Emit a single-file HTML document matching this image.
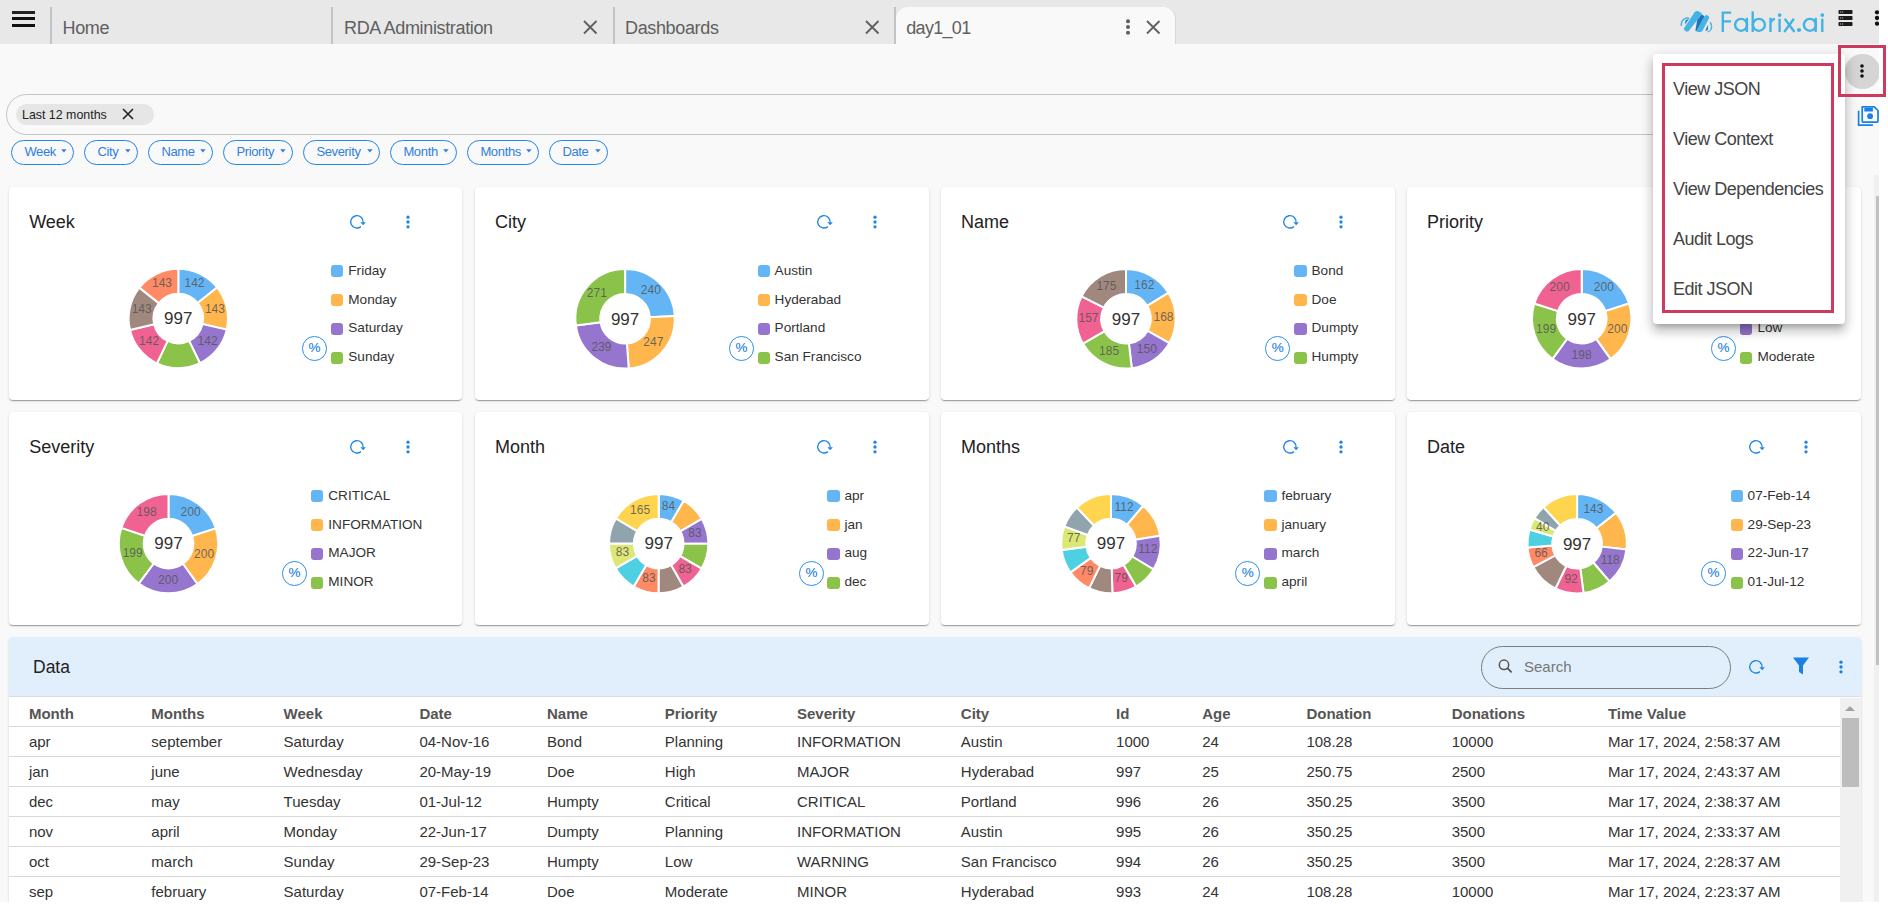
<!DOCTYPE html>
<html><head><meta charset="utf-8"><style>
*{box-sizing:border-box;}
html,body{margin:0;padding:0;}
body{width:1888px;height:905px;background:#fff;position:relative;overflow:hidden;font-family:"Liberation Sans", sans-serif;}
#app{position:absolute;left:0;top:0;width:1879px;height:902px;background:#f9f9f9;overflow:hidden;}
.abs{position:absolute;}
.tabbar{position:absolute;left:0;top:0;width:1879px;height:44px;background:#e8e8e8;}
.tabtxt{position:absolute;font-size:18px;letter-spacing:-0.35px;color:#5f5f5f;white-space:nowrap;line-height:20px;top:17.9px;}
.tdiv{position:absolute;top:7px;width:2px;height:37px;background:#bec4c8;}
.card{position:absolute;width:453.75px;height:213px;background:#fff;border-radius:4px;box-shadow:0 2px 1px -1px rgba(0,0,0,.2),0 1px 1px 0 rgba(0,0,0,.14),0 1px 3px 0 rgba(0,0,0,.12);}
.ctitle{position:absolute;font-size:18px;color:#222;line-height:19px;white-space:nowrap;}
.lsq{position:absolute;width:12.2px;height:12.2px;border-radius:3px;}
.ltx{position:absolute;font-size:13.6px;color:#333;line-height:18px;white-space:nowrap;}
.pct{position:absolute;width:24.6px;height:24.6px;border:1px solid #2a8ff0;border-radius:50%;color:#1a7ee0;font-size:13.5px;-webkit-text-stroke:0.1px #1a7ee0;line-height:22.6px;text-align:center;}
.donuts{position:absolute;left:0;top:0;}
.dl{font-family:"Liberation Sans", sans-serif;font-size:12px;fill:#555;fill-opacity:.85;}
.dc{font-family:"Liberation Sans", sans-serif;font-size:17px;fill:#333;}
.chip{position:absolute;top:140px;height:24.5px;border:1.5px solid #2185e8;border-radius:13px;color:#2f7fe0;font-size:13px;letter-spacing:-0.35px;line-height:22.4px;white-space:nowrap;padding-left:12.4px;}
.chip i{position:absolute;top:9.3px;width:0;height:0;border-left:2.6px solid transparent;border-right:2.6px solid transparent;border-top:3.2px solid #2f7fe0;}
.th{position:absolute;font-size:15px;font-weight:bold;color:#555;white-space:nowrap;line-height:18px;}
.td{position:absolute;font-size:15px;color:#333;white-space:nowrap;line-height:18px;}
.rl{position:absolute;left:9px;width:1831px;height:1px;background:#d9d9d9;}
.menuitem{position:absolute;left:1673px;font-size:18px;letter-spacing:-0.5px;color:#444;margin-top:0.8px;white-space:nowrap;line-height:20px;}
</style></head>
<body>
<div id="app">

<div class="tabbar"></div>
<div class="abs" style="left:12px;top:11px;width:23px;height:3px;background:#222"></div>
<div class="abs" style="left:12px;top:17px;width:23px;height:3px;background:#111"></div>
<div class="abs" style="left:12px;top:23.5px;width:23px;height:3px;background:#111"></div>
<div class="tdiv" style="left:50px"></div>
<div class="tabtxt" style="left:62.5px;">Home</div>
<div class="tdiv" style="left:331px"></div>
<div class="tabtxt" style="left:344px;">RDA Administration</div>
<svg class="abs" style="left:582.0px;top:19.1px" width="16.5" height="16.5"><path d="M2,2L14.5,14.5M14.5,2L2,14.5" stroke="#5f5f5f" stroke-width="1.8"/></svg>
<div class="tdiv" style="left:613px"></div>
<div class="tabtxt" style="left:625px;">Dashboards</div>
<svg class="abs" style="left:863.5px;top:19.1px" width="16.5" height="16.5"><path d="M2,2L14.5,14.5M14.5,2L2,14.5" stroke="#5f5f5f" stroke-width="1.8"/></svg>
<div class="tdiv" style="left:894px"></div>
<div class="abs" style="left:896px;top:7px;width:279.5px;height:37px;background:#f9f9f9;border-radius:12px 12px 0 0;border-right:1px solid #d3d8dc;"></div>
<div class="tabtxt" style="left:906.3px;letter-spacing:-0.7px">day1_01</div>
<svg class="abs" style="left:1122.9px;top:17.3px" width="10" height="20"><circle cx="5" cy="4.3" r="2.0" fill="#5f5f5f"/><circle cx="5" cy="10" r="2.0" fill="#5f5f5f"/><circle cx="5" cy="15.7" r="2.0" fill="#5f5f5f"/></svg>
<svg class="abs" style="left:1144.5px;top:19.1px" width="16.5" height="16.5"><path d="M2,2L14.5,14.5M14.5,2L2,14.5" stroke="#5f5f5f" stroke-width="1.8"/></svg>
<svg class="abs" style="left:1676px;top:6px" width="40" height="30" viewBox="0 0 40 30">
  <path d="M5.3,20 Q4.8,13.6 10.5,12 Q12.2,11.7 13.2,12.6" fill="none" stroke="#42b4e6" stroke-width="1.4"/>
  <path d="M9.6,14.2 L13,12.8 L8.8,18.8Z" fill="#1e73be"/>
  <path d="M8,22.2 L18.6,6.3 Q20,4.5 22,5 L24.3,6.2 Q26,7.3 25.5,8.4 L12.8,24.9 Q11.5,26 9.9,25.4 L8.6,24.3 Q7.5,23.3 8,22.2 Z" fill="#42b4e6"/>
  <path d="M21.2,13.9 L25.9,8.3 L28.6,10.6 L20.4,25.2 L19.4,24.8Z" fill="#1e73be"/>
  <path d="M20.6,25 L28.8,10.2 Q29.8,8.8 31.2,9.2 L32.4,9.9 Q33.6,10.8 33.2,12 L26.3,25 Q25.6,26 24.3,26 L22,26 Q20.4,26 20.6,25Z" fill="#42b4e6"/>
  <path d="M32.2,18.6 L31.8,23.9 L29.2,24.9Z" fill="#1e73be"/>
  <path d="M34.3,16 Q36.5,20 35,23.5 Q33.8,25.6 31.5,25.8" fill="none" stroke="#42b4e6" stroke-width="1.3"/>
</svg>
<svg class="abs" style="left:1716px;top:6px" width="112" height="30" viewBox="0 0 112 30">
 <g fill="none" stroke="#3fb3e6" stroke-width="2.35">
  <path d="M6.8,26V5.5M5.7,6.6H15.1M5.7,15.4H15"/>
  <circle cx="25.1" cy="18.8" r="6.0"/><path d="M30.9,11.8V26"/>
  <path d="M36.7,5.4V26"/><circle cx="42.9" cy="18.8" r="6.0"/>
  <path d="M54.5,11.8V26M54.5,17Q55.8,13.1 59,12.9"/>
  <path d="M63.6,12.7V26"/>
  <path d="M68.8,12.7L78.5,26M77.9,12.7L68.2,26" stroke-width="2.3"/>
  <circle cx="93.9" cy="18.8" r="6.0"/><path d="M99.7,11.8V26"/>
  <path d="M106.3,12.7V26"/>
 </g>
 <g fill="#3fb3e6"><circle cx="63.7" cy="9.1" r="1.9"/><circle cx="83" cy="24" r="2.1"/><circle cx="106.3" cy="9.1" r="1.9"/></g>
</svg>
<svg class="abs" style="left:1838px;top:9px" width="15" height="19" viewBox="0 0 15 19">
  <rect x="0.5" y="1" width="14" height="4" rx="0.8" fill="#1c1c1c"/>
  <rect x="0.5" y="7" width="14" height="4" rx="0.8" fill="#1c1c1c"/>
  <rect x="0.5" y="13" width="14" height="4" rx="0.8" fill="#1c1c1c"/>
  <rect x="2" y="2.5" width="1.2" height="1" fill="#bbb"/><rect x="4" y="2.5" width="1.2" height="1" fill="#bbb"/>
  <rect x="2" y="8.5" width="1.2" height="1" fill="#bbb"/><rect x="4" y="8.5" width="1.2" height="1" fill="#bbb"/>
  <rect x="2" y="14.5" width="1.2" height="1" fill="#bbb"/><rect x="4" y="14.5" width="1.2" height="1" fill="#bbb"/>
</svg>
<svg class="abs" style="left:1871.6px;top:8.2px" width="10" height="20"><circle cx="5" cy="4.3" r="2.15" fill="#111"/><circle cx="5" cy="10" r="2.15" fill="#111"/><circle cx="5" cy="15.7" r="2.15" fill="#111"/></svg>


<div class="abs" style="left:6px;top:94px;width:1830px;height:41px;border:1px solid #c4c4c4;border-radius:21px;"></div>
<div class="abs" style="left:16px;top:104px;width:138px;height:21px;background:#e6e6e6;border-radius:11px;"></div>
<div class="abs" style="left:22px;top:107px;font-size:12.4px;line-height:16px;color:#222;white-space:nowrap">Last 12 months</div>
<svg class="abs" style="left:120.7px;top:107.2px" width="14" height="14"><path d="M2,2L12,12M12,2L2,12" stroke="#222" stroke-width="1.6"/></svg>
<div class="chip" style="left:11px;width:63px">Week<svg class="abs" style="left:48.7px;top:7.6px" width="6" height="4" viewBox="0 0 6 4"><path d="M0.2,0.2H5.6L2.9,3.6Z" fill="#2f7fe0"/></svg></div>
<div class="chip" style="left:84px;width:54px">City<svg class="abs" style="left:39.7px;top:7.6px" width="6" height="4" viewBox="0 0 6 4"><path d="M0.2,0.2H5.6L2.9,3.6Z" fill="#2f7fe0"/></svg></div>
<div class="chip" style="left:148px;width:65px">Name<svg class="abs" style="left:50.7px;top:7.6px" width="6" height="4" viewBox="0 0 6 4"><path d="M0.2,0.2H5.6L2.9,3.6Z" fill="#2f7fe0"/></svg></div>
<div class="chip" style="left:223px;width:70px">Priority<svg class="abs" style="left:55.7px;top:7.6px" width="6" height="4" viewBox="0 0 6 4"><path d="M0.2,0.2H5.6L2.9,3.6Z" fill="#2f7fe0"/></svg></div>
<div class="chip" style="left:303px;width:77px">Severity<svg class="abs" style="left:62.7px;top:7.6px" width="6" height="4" viewBox="0 0 6 4"><path d="M0.2,0.2H5.6L2.9,3.6Z" fill="#2f7fe0"/></svg></div>
<div class="chip" style="left:390px;width:66.5px">Month<svg class="abs" style="left:52.2px;top:7.6px" width="6" height="4" viewBox="0 0 6 4"><path d="M0.2,0.2H5.6L2.9,3.6Z" fill="#2f7fe0"/></svg></div>
<div class="chip" style="left:467px;width:72px">Months<svg class="abs" style="left:57.7px;top:7.6px" width="6" height="4" viewBox="0 0 6 4"><path d="M0.2,0.2H5.6L2.9,3.6Z" fill="#2f7fe0"/></svg></div>
<div class="chip" style="left:549px;width:59px">Date<svg class="abs" style="left:44.7px;top:7.6px" width="6" height="4" viewBox="0 0 6 4"><path d="M0.2,0.2H5.6L2.9,3.6Z" fill="#2f7fe0"/></svg></div>
<div class="abs" style="left:1845px;top:54px;width:34.5px;height:34.5px;border-radius:50%;background:#d5d5d5"></div>
<svg class="abs" style="left:1857.3px;top:61.4px" width="10" height="20"><circle cx="5" cy="5" r="1.8" fill="#111"/><circle cx="5" cy="10" r="1.8" fill="#111"/><circle cx="5" cy="15" r="1.8" fill="#111"/></svg>
<svg class="abs" style="left:1856px;top:103px" width="24" height="24" viewBox="0 0 24 24">
  <path d="M6.2,3.8 H18.3 L22,7.5 V18.1 Q22,19.1 21,19.1 H7.2 Q6.2,19.1 6.2,18.1 Z" fill="none" stroke="#1a7fe6" stroke-width="1.7" stroke-linejoin="round"/>
  <rect x="8.3" y="5" width="8.6" height="3.5" fill="#1a7fe6"/>
  <circle cx="14.1" cy="13.2" r="2.9" fill="#1a7fe6"/>
  <path d="M2.6,7.8 V22.1 H16.9" fill="none" stroke="#1a7fe6" stroke-width="1.7"/>
</svg>
<div class="abs" style="left:1874px;top:175px;width:5px;height:727px;background:#f0f0f0"></div>
<div class="abs" style="left:1876px;top:196px;width:3px;height:469px;background:#c1c1c1"></div>

<div class="card" style="left:9px;width:453.2px;top:187px;"></div>
<div class="ctitle" style="left:29.2px;top:212.5px;">Week</div>
<svg class="abs" style="left:346.9px;top:211.7px" width="20" height="20" viewBox="0 0 20 20"><path d="M13.9,14.6A6.2,6.2 0 1 1 16.1,10.4" fill="none" stroke="#1f86e8" stroke-width="1.4"/><path d="M13.4,10.2L18.9,10.2L16.15,13.3Z" fill="#1f86e8"/></svg>
<svg class="abs" style="left:402.6px;top:211.5px" width="10" height="20"><circle cx="5" cy="5.2" r="1.65" fill="#1f86e8"/><circle cx="5" cy="10" r="1.65" fill="#1f86e8"/><circle cx="5" cy="14.8" r="1.65" fill="#1f86e8"/></svg>
<div class="lsq" style="left:331.2px;top:265.2px;background:#64b5f6"></div>
<div class="ltx" style="left:348.3px;top:261.8px;">Friday</div>
<div class="lsq" style="left:331.2px;top:294.0px;background:#ffb74d"></div>
<div class="ltx" style="left:348.3px;top:290.6px;">Monday</div>
<div class="lsq" style="left:331.2px;top:322.8px;background:#9575cd"></div>
<div class="ltx" style="left:348.3px;top:319.4px;">Saturday</div>
<div class="lsq" style="left:331.2px;top:351.6px;background:#8bc34a"></div>
<div class="ltx" style="left:348.3px;top:348.2px;">Sunday</div>
<div class="pct" style="left:302.2px;top:336.2px;">%</div><div class="card" style="left:474.8px;width:454.4px;top:187px;"></div>
<div class="ctitle" style="left:495.0px;top:212.5px;">City</div>
<svg class="abs" style="left:813.9px;top:211.7px" width="20" height="20" viewBox="0 0 20 20"><path d="M13.9,14.6A6.2,6.2 0 1 1 16.1,10.4" fill="none" stroke="#1f86e8" stroke-width="1.4"/><path d="M13.4,10.2L18.9,10.2L16.15,13.3Z" fill="#1f86e8"/></svg>
<svg class="abs" style="left:869.6px;top:211.5px" width="10" height="20"><circle cx="5" cy="5.2" r="1.65" fill="#1f86e8"/><circle cx="5" cy="10" r="1.65" fill="#1f86e8"/><circle cx="5" cy="14.8" r="1.65" fill="#1f86e8"/></svg>
<div class="lsq" style="left:757.5px;top:265.2px;background:#64b5f6"></div>
<div class="ltx" style="left:774.6px;top:261.8px;">Austin</div>
<div class="lsq" style="left:757.5px;top:294.0px;background:#ffb74d"></div>
<div class="ltx" style="left:774.6px;top:290.6px;">Hyderabad</div>
<div class="lsq" style="left:757.5px;top:322.8px;background:#9575cd"></div>
<div class="ltx" style="left:774.6px;top:319.4px;">Portland</div>
<div class="lsq" style="left:757.5px;top:351.6px;background:#8bc34a"></div>
<div class="ltx" style="left:774.6px;top:348.2px;">San Francisco</div>
<div class="pct" style="left:729.2px;top:336.2px;">%</div><div class="card" style="left:940.8px;width:454.4px;top:187px;"></div>
<div class="ctitle" style="left:961.0px;top:212.5px;">Name</div>
<svg class="abs" style="left:1279.9px;top:211.7px" width="20" height="20" viewBox="0 0 20 20"><path d="M13.9,14.6A6.2,6.2 0 1 1 16.1,10.4" fill="none" stroke="#1f86e8" stroke-width="1.4"/><path d="M13.4,10.2L18.9,10.2L16.15,13.3Z" fill="#1f86e8"/></svg>
<svg class="abs" style="left:1335.6px;top:211.5px" width="10" height="20"><circle cx="5" cy="5.2" r="1.65" fill="#1f86e8"/><circle cx="5" cy="10" r="1.65" fill="#1f86e8"/><circle cx="5" cy="14.8" r="1.65" fill="#1f86e8"/></svg>
<div class="lsq" style="left:1294.4px;top:265.2px;background:#64b5f6"></div>
<div class="ltx" style="left:1311.5px;top:261.8px;">Bond</div>
<div class="lsq" style="left:1294.4px;top:294.0px;background:#ffb74d"></div>
<div class="ltx" style="left:1311.5px;top:290.6px;">Doe</div>
<div class="lsq" style="left:1294.4px;top:322.8px;background:#9575cd"></div>
<div class="ltx" style="left:1311.5px;top:319.4px;">Dumpty</div>
<div class="lsq" style="left:1294.4px;top:351.6px;background:#8bc34a"></div>
<div class="ltx" style="left:1311.5px;top:348.2px;">Humpty</div>
<div class="pct" style="left:1265.4px;top:336.2px;">%</div><div class="card" style="left:1406.8px;width:454.2px;top:187px;"></div>
<div class="ctitle" style="left:1427.0px;top:212.5px;">Priority</div>
<svg class="abs" style="left:1745.7px;top:211.7px" width="20" height="20" viewBox="0 0 20 20"><path d="M13.9,14.6A6.2,6.2 0 1 1 16.1,10.4" fill="none" stroke="#1f86e8" stroke-width="1.4"/><path d="M13.4,10.2L18.9,10.2L16.15,13.3Z" fill="#1f86e8"/></svg>
<svg class="abs" style="left:1801.4px;top:211.5px" width="10" height="20"><circle cx="5" cy="5.2" r="1.65" fill="#1f86e8"/><circle cx="5" cy="10" r="1.65" fill="#1f86e8"/><circle cx="5" cy="14.8" r="1.65" fill="#1f86e8"/></svg>
<div class="lsq" style="left:1740.3px;top:265.2px;background:#64b5f6"></div>
<div class="ltx" style="left:1757.4px;top:261.8px;">Critical</div>
<div class="lsq" style="left:1740.3px;top:294.0px;background:#ffb74d"></div>
<div class="ltx" style="left:1757.4px;top:290.6px;">High</div>
<div class="lsq" style="left:1740.3px;top:322.8px;background:#9575cd"></div>
<div class="ltx" style="left:1757.4px;top:319.4px;">Low</div>
<div class="lsq" style="left:1740.3px;top:351.6px;background:#8bc34a"></div>
<div class="ltx" style="left:1757.4px;top:348.2px;">Moderate</div>
<div class="pct" style="left:1711.3px;top:336.2px;">%</div><div class="card" style="left:9px;width:453.2px;top:412px;"></div>
<div class="ctitle" style="left:29.2px;top:437.5px;">Severity</div>
<svg class="abs" style="left:346.9px;top:436.7px" width="20" height="20" viewBox="0 0 20 20"><path d="M13.9,14.6A6.2,6.2 0 1 1 16.1,10.4" fill="none" stroke="#1f86e8" stroke-width="1.4"/><path d="M13.4,10.2L18.9,10.2L16.15,13.3Z" fill="#1f86e8"/></svg>
<svg class="abs" style="left:402.6px;top:436.5px" width="10" height="20"><circle cx="5" cy="5.2" r="1.65" fill="#1f86e8"/><circle cx="5" cy="10" r="1.65" fill="#1f86e8"/><circle cx="5" cy="14.8" r="1.65" fill="#1f86e8"/></svg>
<div class="lsq" style="left:311.2px;top:490.2px;background:#64b5f6"></div>
<div class="ltx" style="left:328.3px;top:486.8px;">CRITICAL</div>
<div class="lsq" style="left:311.2px;top:519.0px;background:#ffb74d"></div>
<div class="ltx" style="left:328.3px;top:515.6px;">INFORMATION</div>
<div class="lsq" style="left:311.2px;top:547.8px;background:#9575cd"></div>
<div class="ltx" style="left:328.3px;top:544.4px;">MAJOR</div>
<div class="lsq" style="left:311.2px;top:576.6px;background:#8bc34a"></div>
<div class="ltx" style="left:328.3px;top:573.2px;">MINOR</div>
<div class="pct" style="left:282.1px;top:561.2px;">%</div><div class="card" style="left:474.8px;width:454.4px;top:412px;"></div>
<div class="ctitle" style="left:495.0px;top:437.5px;">Month</div>
<svg class="abs" style="left:813.9px;top:436.7px" width="20" height="20" viewBox="0 0 20 20"><path d="M13.9,14.6A6.2,6.2 0 1 1 16.1,10.4" fill="none" stroke="#1f86e8" stroke-width="1.4"/><path d="M13.4,10.2L18.9,10.2L16.15,13.3Z" fill="#1f86e8"/></svg>
<svg class="abs" style="left:869.6px;top:436.5px" width="10" height="20"><circle cx="5" cy="5.2" r="1.65" fill="#1f86e8"/><circle cx="5" cy="10" r="1.65" fill="#1f86e8"/><circle cx="5" cy="14.8" r="1.65" fill="#1f86e8"/></svg>
<div class="lsq" style="left:827.4px;top:490.2px;background:#64b5f6"></div>
<div class="ltx" style="left:844.5px;top:486.8px;">apr</div>
<div class="lsq" style="left:827.4px;top:519.0px;background:#ffb74d"></div>
<div class="ltx" style="left:844.5px;top:515.6px;">jan</div>
<div class="lsq" style="left:827.4px;top:547.8px;background:#9575cd"></div>
<div class="ltx" style="left:844.5px;top:544.4px;">aug</div>
<div class="lsq" style="left:827.4px;top:576.6px;background:#8bc34a"></div>
<div class="ltx" style="left:844.5px;top:573.2px;">dec</div>
<div class="pct" style="left:799.2px;top:561.2px;">%</div><div class="card" style="left:940.8px;width:454.4px;top:412px;"></div>
<div class="ctitle" style="left:961.0px;top:437.5px;">Months</div>
<svg class="abs" style="left:1279.9px;top:436.7px" width="20" height="20" viewBox="0 0 20 20"><path d="M13.9,14.6A6.2,6.2 0 1 1 16.1,10.4" fill="none" stroke="#1f86e8" stroke-width="1.4"/><path d="M13.4,10.2L18.9,10.2L16.15,13.3Z" fill="#1f86e8"/></svg>
<svg class="abs" style="left:1335.6px;top:436.5px" width="10" height="20"><circle cx="5" cy="5.2" r="1.65" fill="#1f86e8"/><circle cx="5" cy="10" r="1.65" fill="#1f86e8"/><circle cx="5" cy="14.8" r="1.65" fill="#1f86e8"/></svg>
<div class="lsq" style="left:1264.4px;top:490.2px;background:#64b5f6"></div>
<div class="ltx" style="left:1281.5px;top:486.8px;">february</div>
<div class="lsq" style="left:1264.4px;top:519.0px;background:#ffb74d"></div>
<div class="ltx" style="left:1281.5px;top:515.6px;">january</div>
<div class="lsq" style="left:1264.4px;top:547.8px;background:#9575cd"></div>
<div class="ltx" style="left:1281.5px;top:544.4px;">march</div>
<div class="lsq" style="left:1264.4px;top:576.6px;background:#8bc34a"></div>
<div class="ltx" style="left:1281.5px;top:573.2px;">april</div>
<div class="pct" style="left:1235.4px;top:561.2px;">%</div><div class="card" style="left:1406.8px;width:454.2px;top:412px;"></div>
<div class="ctitle" style="left:1427.0px;top:437.5px;">Date</div>
<svg class="abs" style="left:1745.7px;top:436.7px" width="20" height="20" viewBox="0 0 20 20"><path d="M13.9,14.6A6.2,6.2 0 1 1 16.1,10.4" fill="none" stroke="#1f86e8" stroke-width="1.4"/><path d="M13.4,10.2L18.9,10.2L16.15,13.3Z" fill="#1f86e8"/></svg>
<svg class="abs" style="left:1801.4px;top:436.5px" width="10" height="20"><circle cx="5" cy="5.2" r="1.65" fill="#1f86e8"/><circle cx="5" cy="10" r="1.65" fill="#1f86e8"/><circle cx="5" cy="14.8" r="1.65" fill="#1f86e8"/></svg>
<div class="lsq" style="left:1730.5px;top:490.2px;background:#64b5f6"></div>
<div class="ltx" style="left:1747.6px;top:486.8px;">07-Feb-14</div>
<div class="lsq" style="left:1730.5px;top:519.0px;background:#ffb74d"></div>
<div class="ltx" style="left:1747.6px;top:515.6px;">29-Sep-23</div>
<div class="lsq" style="left:1730.5px;top:547.8px;background:#9575cd"></div>
<div class="ltx" style="left:1747.6px;top:544.4px;">22-Jun-17</div>
<div class="lsq" style="left:1730.5px;top:576.6px;background:#8bc34a"></div>
<div class="ltx" style="left:1747.6px;top:573.2px;">01-Jul-12</div>
<div class="pct" style="left:1701.2px;top:561.2px;">%</div>
<svg class="donuts" width="1888" height="905" viewBox="0 0 1888 905"><path d="M178.30,268.80A49.7,49.7 0 0 1 217.07,287.41L197.65,302.99A24.8,24.8 0 0 0 178.30,293.70Z" fill="#64b5f6" stroke="#fff" stroke-width="2" stroke-linejoin="round"/>
<path d="M217.07,287.41A49.7,49.7 0 0 1 226.74,329.60L202.47,324.04A24.8,24.8 0 0 0 197.65,302.99Z" fill="#ffb74d" stroke="#fff" stroke-width="2" stroke-linejoin="round"/>
<path d="M226.74,329.60A49.7,49.7 0 0 1 199.94,363.24L189.10,340.82A24.8,24.8 0 0 0 202.47,324.04Z" fill="#9575cd" stroke="#fff" stroke-width="2" stroke-linejoin="round"/>
<path d="M199.94,363.24A49.7,49.7 0 0 1 156.94,363.37L167.64,340.89A24.8,24.8 0 0 0 189.10,340.82Z" fill="#8bc34a" stroke="#fff" stroke-width="2" stroke-linejoin="round"/>
<path d="M156.94,363.37A49.7,49.7 0 0 1 129.93,329.91L154.16,324.19A24.8,24.8 0 0 0 167.64,340.89Z" fill="#f06292" stroke="#fff" stroke-width="2" stroke-linejoin="round"/>
<path d="M129.93,329.91A49.7,49.7 0 0 1 139.33,287.65L158.86,303.11A24.8,24.8 0 0 0 154.16,324.19Z" fill="#a1887f" stroke="#fff" stroke-width="2" stroke-linejoin="round"/>
<path d="M139.33,287.65A49.7,49.7 0 0 1 178.30,268.80L178.30,293.70A24.8,24.8 0 0 0 158.86,303.11Z" fill="#ff8a65" stroke="#fff" stroke-width="2" stroke-linejoin="round"/>
<text x="194.5" y="287.3" text-anchor="middle" class="dl">142</text>
<text x="214.9" y="312.7" text-anchor="middle" class="dl">143</text>
<text x="207.6" y="344.5" text-anchor="middle" class="dl">142</text>
<text x="149.1" y="344.7" text-anchor="middle" class="dl">142</text>
<text x="141.7" y="313.0" text-anchor="middle" class="dl">143</text>
<text x="162.0" y="287.3" text-anchor="middle" class="dl">143</text>
<text x="178.3" y="324.3" text-anchor="middle" class="dc">997</text><path d="M625.10,269.10A49.7,49.7 0 0 1 674.72,315.90L649.86,317.36A24.8,24.8 0 0 0 625.10,294.00Z" fill="#64b5f6" stroke="#fff" stroke-width="2" stroke-linejoin="round"/>
<path d="M674.72,315.90A49.7,49.7 0 0 1 628.70,368.37L626.90,343.53A24.8,24.8 0 0 0 649.86,317.36Z" fill="#ffb74d" stroke="#fff" stroke-width="2" stroke-linejoin="round"/>
<path d="M628.70,368.37A49.7,49.7 0 0 1 575.87,325.59L600.53,322.19A24.8,24.8 0 0 0 626.90,343.53Z" fill="#9575cd" stroke="#fff" stroke-width="2" stroke-linejoin="round"/>
<path d="M575.87,325.59A49.7,49.7 0 0 1 625.10,269.10L625.10,294.00A24.8,24.8 0 0 0 600.53,322.19Z" fill="#8bc34a" stroke="#fff" stroke-width="2" stroke-linejoin="round"/>
<text x="650.8" y="294.1" text-anchor="middle" class="dl">240</text>
<text x="653.3" y="346.1" text-anchor="middle" class="dl">247</text>
<text x="601.5" y="350.5" text-anchor="middle" class="dl">239</text>
<text x="596.8" y="296.8" text-anchor="middle" class="dl">271</text>
<text x="625.1" y="324.6" text-anchor="middle" class="dc">997</text><path d="M1126.00,269.10A49.7,49.7 0 0 1 1168.37,292.83L1147.14,305.84A24.8,24.8 0 0 0 1126.00,294.00Z" fill="#64b5f6" stroke="#fff" stroke-width="2" stroke-linejoin="round"/>
<path d="M1168.37,292.83A49.7,49.7 0 0 1 1169.40,343.01L1147.66,330.88A24.8,24.8 0 0 0 1147.14,305.84Z" fill="#ffb74d" stroke="#fff" stroke-width="2" stroke-linejoin="round"/>
<path d="M1169.40,343.01A49.7,49.7 0 0 1 1131.78,368.16L1128.88,343.43A24.8,24.8 0 0 0 1147.66,330.88Z" fill="#9575cd" stroke="#fff" stroke-width="2" stroke-linejoin="round"/>
<path d="M1131.78,368.16A49.7,49.7 0 0 1 1082.91,343.56L1104.50,331.15A24.8,24.8 0 0 0 1128.88,343.43Z" fill="#8bc34a" stroke="#fff" stroke-width="2" stroke-linejoin="round"/>
<path d="M1082.91,343.56A49.7,49.7 0 0 1 1081.64,296.38L1103.87,307.61A24.8,24.8 0 0 0 1104.50,331.15Z" fill="#f06292" stroke="#fff" stroke-width="2" stroke-linejoin="round"/>
<path d="M1081.64,296.38A49.7,49.7 0 0 1 1126.00,269.10L1126.00,294.00A24.8,24.8 0 0 0 1103.87,307.61Z" fill="#a1887f" stroke="#fff" stroke-width="2" stroke-linejoin="round"/>
<text x="1144.3" y="288.7" text-anchor="middle" class="dl">162</text>
<text x="1163.5" y="320.6" text-anchor="middle" class="dl">168</text>
<text x="1146.8" y="352.6" text-anchor="middle" class="dl">150</text>
<text x="1109.1" y="354.9" text-anchor="middle" class="dl">185</text>
<text x="1088.5" y="322.4" text-anchor="middle" class="dl">157</text>
<text x="1106.4" y="289.5" text-anchor="middle" class="dl">175</text>
<text x="1126" y="324.6" text-anchor="middle" class="dc">997</text><path d="M1581.70,269.00A49.7,49.7 0 0 1 1629.03,303.52L1605.32,311.13A24.8,24.8 0 0 0 1581.70,293.90Z" fill="#64b5f6" stroke="#fff" stroke-width="2" stroke-linejoin="round"/>
<path d="M1629.03,303.52A49.7,49.7 0 0 1 1610.61,359.13L1596.12,338.87A24.8,24.8 0 0 0 1605.32,311.13Z" fill="#ffb74d" stroke="#fff" stroke-width="2" stroke-linejoin="round"/>
<path d="M1610.61,359.13A49.7,49.7 0 0 1 1552.54,358.94L1567.15,338.78A24.8,24.8 0 0 0 1596.12,338.87Z" fill="#9575cd" stroke="#fff" stroke-width="2" stroke-linejoin="round"/>
<path d="M1552.54,358.94A49.7,49.7 0 0 1 1534.37,303.52L1558.08,311.13A24.8,24.8 0 0 0 1567.15,338.78Z" fill="#8bc34a" stroke="#fff" stroke-width="2" stroke-linejoin="round"/>
<path d="M1534.37,303.52A49.7,49.7 0 0 1 1581.70,269.00L1581.70,293.90A24.8,24.8 0 0 0 1558.08,311.13Z" fill="#f06292" stroke="#fff" stroke-width="2" stroke-linejoin="round"/>
<text x="1603.8" y="291.0" text-anchor="middle" class="dl">200</text>
<text x="1617.3" y="333.1" text-anchor="middle" class="dl">200</text>
<text x="1581.6" y="358.8" text-anchor="middle" class="dl">198</text>
<text x="1546.1" y="333.0" text-anchor="middle" class="dl">199</text>
<text x="1559.6" y="291.0" text-anchor="middle" class="dl">200</text>
<text x="1581.7" y="324.5" text-anchor="middle" class="dc">997</text><path d="M168.50,493.90A49.7,49.7 0 0 1 215.83,528.42L192.12,536.03A24.8,24.8 0 0 0 168.50,518.80Z" fill="#64b5f6" stroke="#fff" stroke-width="2" stroke-linejoin="round"/>
<path d="M215.83,528.42A49.7,49.7 0 0 1 197.41,584.03L182.92,563.77A24.8,24.8 0 0 0 192.12,536.03Z" fill="#ffb74d" stroke="#fff" stroke-width="2" stroke-linejoin="round"/>
<path d="M197.41,584.03A49.7,49.7 0 0 1 138.83,583.47L153.70,563.50A24.8,24.8 0 0 0 182.92,563.77Z" fill="#9575cd" stroke="#fff" stroke-width="2" stroke-linejoin="round"/>
<path d="M138.83,583.47A49.7,49.7 0 0 1 121.37,527.83L144.98,535.73A24.8,24.8 0 0 0 153.70,563.50Z" fill="#8bc34a" stroke="#fff" stroke-width="2" stroke-linejoin="round"/>
<path d="M121.37,527.83A49.7,49.7 0 0 1 168.50,493.90L168.50,518.80A24.8,24.8 0 0 0 144.98,535.73Z" fill="#f06292" stroke="#fff" stroke-width="2" stroke-linejoin="round"/>
<text x="190.6" y="515.9" text-anchor="middle" class="dl">200</text>
<text x="204.1" y="558.0" text-anchor="middle" class="dl">200</text>
<text x="168.1" y="583.7" text-anchor="middle" class="dl">200</text>
<text x="132.7" y="557.4" text-anchor="middle" class="dl">199</text>
<text x="146.6" y="515.8" text-anchor="middle" class="dl">198</text>
<text x="168.5" y="549.4" text-anchor="middle" class="dc">997</text><path d="M658.70,493.90A49.7,49.7 0 0 1 683.80,500.70L671.22,522.19A24.8,24.8 0 0 0 658.70,518.80Z" fill="#64b5f6" stroke="#fff" stroke-width="2" stroke-linejoin="round"/>
<path d="M683.80,500.70A49.7,49.7 0 0 1 701.87,518.98L680.24,531.31A24.8,24.8 0 0 0 671.22,522.19Z" fill="#ffb74d" stroke="#fff" stroke-width="2" stroke-linejoin="round"/>
<path d="M701.87,518.98A49.7,49.7 0 0 1 708.40,543.83L683.50,543.72A24.8,24.8 0 0 0 680.24,531.31Z" fill="#9575cd" stroke="#fff" stroke-width="2" stroke-linejoin="round"/>
<path d="M708.40,543.83A49.7,49.7 0 0 1 701.64,568.63L680.13,556.09A24.8,24.8 0 0 0 683.50,543.72Z" fill="#8bc34a" stroke="#fff" stroke-width="2" stroke-linejoin="round"/>
<path d="M701.64,568.63A49.7,49.7 0 0 1 683.39,586.73L671.02,565.12A24.8,24.8 0 0 0 680.13,556.09Z" fill="#f06292" stroke="#fff" stroke-width="2" stroke-linejoin="round"/>
<path d="M683.39,586.73A49.7,49.7 0 0 1 658.54,593.30L658.62,568.40A24.8,24.8 0 0 0 671.02,565.12Z" fill="#a1887f" stroke="#fff" stroke-width="2" stroke-linejoin="round"/>
<path d="M658.54,593.30A49.7,49.7 0 0 1 633.74,586.58L646.24,565.04A24.8,24.8 0 0 0 658.62,568.40Z" fill="#ff8a65" stroke="#fff" stroke-width="2" stroke-linejoin="round"/>
<path d="M633.74,586.58A49.7,49.7 0 0 1 615.61,568.36L637.20,555.95A24.8,24.8 0 0 0 646.24,565.04Z" fill="#4dd0e1" stroke="#fff" stroke-width="2" stroke-linejoin="round"/>
<path d="M615.61,568.36A49.7,49.7 0 0 1 609.00,543.52L633.90,543.56A24.8,24.8 0 0 0 637.20,555.95Z" fill="#dce775" stroke="#fff" stroke-width="2" stroke-linejoin="round"/>
<path d="M609.00,543.52A49.7,49.7 0 0 1 615.84,518.43L637.31,531.04A24.8,24.8 0 0 0 633.90,543.56Z" fill="#90a4ae" stroke="#fff" stroke-width="2" stroke-linejoin="round"/>
<path d="M615.84,518.43A49.7,49.7 0 0 1 658.70,493.90L658.70,518.80A24.8,24.8 0 0 0 637.31,531.04Z" fill="#ffd54f" stroke="#fff" stroke-width="2" stroke-linejoin="round"/>
<text x="668.5" y="510.0" text-anchor="middle" class="dl">84</text>
<text x="695.0" y="536.7" text-anchor="middle" class="dl">83</text>
<text x="685.1" y="572.8" text-anchor="middle" class="dl">83</text>
<text x="648.9" y="582.4" text-anchor="middle" class="dl">83</text>
<text x="622.5" y="555.8" text-anchor="middle" class="dl">83</text>
<text x="640.1" y="513.7" text-anchor="middle" class="dl">165</text>
<text x="658.7" y="549.4" text-anchor="middle" class="dc">997</text><path d="M1111.00,493.90A49.7,49.7 0 0 1 1143.24,505.77L1127.09,524.73A24.8,24.8 0 0 0 1111.00,518.80Z" fill="#64b5f6" stroke="#fff" stroke-width="2" stroke-linejoin="round"/>
<path d="M1143.24,505.77A49.7,49.7 0 0 1 1160.07,535.72L1135.49,539.67A24.8,24.8 0 0 0 1127.09,524.73Z" fill="#ffb74d" stroke="#fff" stroke-width="2" stroke-linejoin="round"/>
<path d="M1160.07,535.72A49.7,49.7 0 0 1 1153.46,569.44L1132.19,556.49A24.8,24.8 0 0 0 1135.49,539.67Z" fill="#9575cd" stroke="#fff" stroke-width="2" stroke-linejoin="round"/>
<path d="M1153.46,569.44A49.7,49.7 0 0 1 1135.96,586.58L1123.46,565.04A24.8,24.8 0 0 0 1132.19,556.49Z" fill="#8bc34a" stroke="#fff" stroke-width="2" stroke-linejoin="round"/>
<path d="M1135.96,586.58A49.7,49.7 0 0 1 1112.41,593.28L1111.70,568.39A24.8,24.8 0 0 0 1123.46,565.04Z" fill="#f06292" stroke="#fff" stroke-width="2" stroke-linejoin="round"/>
<path d="M1112.41,593.28A49.7,49.7 0 0 1 1089.07,588.20L1100.06,565.86A24.8,24.8 0 0 0 1111.70,568.39Z" fill="#a1887f" stroke="#fff" stroke-width="2" stroke-linejoin="round"/>
<path d="M1089.07,588.20A49.7,49.7 0 0 1 1070.44,572.32L1090.76,557.93A24.8,24.8 0 0 0 1100.06,565.86Z" fill="#ff8a65" stroke="#fff" stroke-width="2" stroke-linejoin="round"/>
<path d="M1070.44,572.32A49.7,49.7 0 0 1 1061.72,550.08L1086.41,546.83A24.8,24.8 0 0 0 1090.76,557.93Z" fill="#4dd0e1" stroke="#fff" stroke-width="2" stroke-linejoin="round"/>
<path d="M1061.72,550.08A49.7,49.7 0 0 1 1064.39,526.35L1087.74,534.99A24.8,24.8 0 0 0 1086.41,546.83Z" fill="#dce775" stroke="#fff" stroke-width="2" stroke-linejoin="round"/>
<path d="M1064.39,526.35A49.7,49.7 0 0 1 1076.90,507.45L1093.98,525.56A24.8,24.8 0 0 0 1087.74,534.99Z" fill="#90a4ae" stroke="#fff" stroke-width="2" stroke-linejoin="round"/>
<path d="M1076.90,507.45A49.7,49.7 0 0 1 1111.00,493.90L1111.00,518.80A24.8,24.8 0 0 0 1093.98,525.56Z" fill="#ffd54f" stroke="#fff" stroke-width="2" stroke-linejoin="round"/>
<text x="1124.0" y="511.0" text-anchor="middle" class="dl">112</text>
<text x="1147.8" y="553.4" text-anchor="middle" class="dl">112</text>
<text x="1121.3" y="582.3" text-anchor="middle" class="dl">79</text>
<text x="1086.7" y="574.7" text-anchor="middle" class="dl">79</text>
<text x="1073.7" y="542.0" text-anchor="middle" class="dl">77</text>
<text x="1111" y="549.4" text-anchor="middle" class="dc">997</text><path d="M1577.10,494.00A49.7,49.7 0 0 1 1616.07,512.85L1596.54,528.31A24.8,24.8 0 0 0 1577.10,518.90Z" fill="#64b5f6" stroke="#fff" stroke-width="2" stroke-linejoin="round"/>
<path d="M1616.07,512.85A49.7,49.7 0 0 1 1626.45,549.56L1601.73,546.62A24.8,24.8 0 0 0 1596.54,528.31Z" fill="#ffb74d" stroke="#fff" stroke-width="2" stroke-linejoin="round"/>
<path d="M1626.45,549.56A49.7,49.7 0 0 1 1609.46,581.42L1593.25,562.52A24.8,24.8 0 0 0 1601.73,546.62Z" fill="#9575cd" stroke="#fff" stroke-width="2" stroke-linejoin="round"/>
<path d="M1609.46,581.42A49.7,49.7 0 0 1 1583.50,592.99L1580.30,568.29A24.8,24.8 0 0 0 1593.25,562.52Z" fill="#8bc34a" stroke="#fff" stroke-width="2" stroke-linejoin="round"/>
<path d="M1583.50,592.99A49.7,49.7 0 0 1 1555.46,588.44L1566.30,566.02A24.8,24.8 0 0 0 1580.30,568.29Z" fill="#f06292" stroke="#fff" stroke-width="2" stroke-linejoin="round"/>
<path d="M1555.46,588.44A49.7,49.7 0 0 1 1533.25,567.09L1555.22,555.37A24.8,24.8 0 0 0 1566.30,566.02Z" fill="#a1887f" stroke="#fff" stroke-width="2" stroke-linejoin="round"/>
<path d="M1533.25,567.09A49.7,49.7 0 0 1 1527.54,547.38L1552.37,545.53A24.8,24.8 0 0 0 1555.22,555.37Z" fill="#ff8a65" stroke="#fff" stroke-width="2" stroke-linejoin="round"/>
<path d="M1527.54,547.38A49.7,49.7 0 0 1 1529.50,529.42L1553.35,536.57A24.8,24.8 0 0 0 1552.37,545.53Z" fill="#4dd0e1" stroke="#fff" stroke-width="2" stroke-linejoin="round"/>
<path d="M1529.50,529.42A49.7,49.7 0 0 1 1534.56,518.00L1555.87,530.87A24.8,24.8 0 0 0 1553.35,536.57Z" fill="#dce775" stroke="#fff" stroke-width="2" stroke-linejoin="round"/>
<path d="M1534.56,518.00A49.7,49.7 0 0 1 1543.45,507.12L1560.31,525.45A24.8,24.8 0 0 0 1555.87,530.87Z" fill="#90a4ae" stroke="#fff" stroke-width="2" stroke-linejoin="round"/>
<path d="M1543.45,507.12A49.7,49.7 0 0 1 1577.10,494.00L1577.10,518.90A24.8,24.8 0 0 0 1560.31,525.45Z" fill="#ffd54f" stroke="#fff" stroke-width="2" stroke-linejoin="round"/>
<text x="1593.4" y="512.5" text-anchor="middle" class="dl">143</text>
<text x="1610.2" y="563.9" text-anchor="middle" class="dl">118</text>
<text x="1571.1" y="583.3" text-anchor="middle" class="dl">92</text>
<text x="1541.1" y="556.7" text-anchor="middle" class="dl">66</text>
<text x="1542.8" y="531.1" text-anchor="middle" class="dl">40</text>
<text x="1577.1" y="549.5" text-anchor="middle" class="dc">997</text></svg>
<div class="abs" style="left:9px;top:636.5px;width:1852px;height:300px;background:#fff;border-radius:4px;box-shadow:0 2px 1px -1px rgba(0,0,0,.2),0 1px 1px 0 rgba(0,0,0,.14),0 1px 3px 0 rgba(0,0,0,.12);"></div>
<div class="abs" style="left:9px;top:636.5px;width:1852px;height:60.5px;background:#e1effc;border-radius:4px 4px 0 0;border-bottom:1px solid #d6dde4;"></div>
<div class="abs" style="left:33px;top:656.8px;font-size:17.5px;line-height:20px;color:#222">Data</div>
<div class="abs" style="left:1481px;top:646px;width:250px;height:43px;border:1px solid #7c7c7c;border-radius:22px;"></div>
<svg class="abs" style="left:1496px;top:657px" width="20" height="20" viewBox="0 0 20 20"><circle cx="8" cy="7.8" r="4.7" fill="none" stroke="#555" stroke-width="1.5"/><path d="M11.4,11.2L15.6,15.4" stroke="#555" stroke-width="1.8"/></svg>
<div class="abs" style="left:1524px;top:657.5px;font-size:15px;line-height:18px;color:#767676">Search</div>
<svg class="abs" style="left:1746.2px;top:656.8px" width="20" height="20" viewBox="0 0 20 20"><path d="M13.9,14.6A6.2,6.2 0 1 1 16.1,10.4" fill="none" stroke="#1f86e8" stroke-width="1.4"/><path d="M13.4,10.2L18.9,10.2L16.15,13.3Z" fill="#1f86e8"/></svg>
<svg class="abs" style="left:1790px;top:655px" width="22" height="22" viewBox="0 0 22 22"><path d="M3,2.5H19L13,10.5V19.5L9,17V10.5Z" fill="#1a80e6"/></svg>
<svg class="abs" style="left:1835.7px;top:656.5px" width="10" height="20"><circle cx="5" cy="5.2" r="1.65" fill="#1a80e6"/><circle cx="5" cy="10" r="1.65" fill="#1a80e6"/><circle cx="5" cy="14.8" r="1.65" fill="#1a80e6"/></svg>
<div class="th" style="left:28.9px;top:704.5px">Month</div>
<div class="th" style="left:151.3px;top:704.5px">Months</div>
<div class="th" style="left:283.6px;top:704.5px">Week</div>
<div class="th" style="left:419.4px;top:704.5px">Date</div>
<div class="th" style="left:547px;top:704.5px">Name</div>
<div class="th" style="left:664.8px;top:704.5px">Priority</div>
<div class="th" style="left:797px;top:704.5px">Severity</div>
<div class="th" style="left:960.8px;top:704.5px">City</div>
<div class="th" style="left:1116.1px;top:704.5px">Id</div>
<div class="th" style="left:1202.2px;top:704.5px">Age</div>
<div class="th" style="left:1306.4px;top:704.5px">Donation</div>
<div class="th" style="left:1451.7px;top:704.5px">Donations</div>
<div class="th" style="left:1607.9px;top:704.5px">Time Value</div>
<div class="rl" style="top:726px"></div>
<div class="td" style="left:28.9px;top:733px">apr</div>
<div class="td" style="left:151.3px;top:733px">september</div>
<div class="td" style="left:283.6px;top:733px">Saturday</div>
<div class="td" style="left:419.4px;top:733px">04-Nov-16</div>
<div class="td" style="left:547px;top:733px">Bond</div>
<div class="td" style="left:664.8px;top:733px">Planning</div>
<div class="td" style="left:797px;top:733px">INFORMATION</div>
<div class="td" style="left:960.8px;top:733px">Austin</div>
<div class="td" style="left:1116.1px;top:733px">1000</div>
<div class="td" style="left:1202.2px;top:733px">24</div>
<div class="td" style="left:1306.4px;top:733px">108.28</div>
<div class="td" style="left:1451.7px;top:733px">10000</div>
<div class="td" style="left:1607.9px;top:733px">Mar 17, 2024, 2:58:37 AM</div>
<div class="rl" style="top:756px"></div>
<div class="td" style="left:28.9px;top:763px">jan</div>
<div class="td" style="left:151.3px;top:763px">june</div>
<div class="td" style="left:283.6px;top:763px">Wednesday</div>
<div class="td" style="left:419.4px;top:763px">20-May-19</div>
<div class="td" style="left:547px;top:763px">Doe</div>
<div class="td" style="left:664.8px;top:763px">High</div>
<div class="td" style="left:797px;top:763px">MAJOR</div>
<div class="td" style="left:960.8px;top:763px">Hyderabad</div>
<div class="td" style="left:1116.1px;top:763px">997</div>
<div class="td" style="left:1202.2px;top:763px">25</div>
<div class="td" style="left:1306.4px;top:763px">250.75</div>
<div class="td" style="left:1451.7px;top:763px">2500</div>
<div class="td" style="left:1607.9px;top:763px">Mar 17, 2024, 2:43:37 AM</div>
<div class="rl" style="top:786px"></div>
<div class="td" style="left:28.9px;top:793px">dec</div>
<div class="td" style="left:151.3px;top:793px">may</div>
<div class="td" style="left:283.6px;top:793px">Tuesday</div>
<div class="td" style="left:419.4px;top:793px">01-Jul-12</div>
<div class="td" style="left:547px;top:793px">Humpty</div>
<div class="td" style="left:664.8px;top:793px">Critical</div>
<div class="td" style="left:797px;top:793px">CRITICAL</div>
<div class="td" style="left:960.8px;top:793px">Portland</div>
<div class="td" style="left:1116.1px;top:793px">996</div>
<div class="td" style="left:1202.2px;top:793px">26</div>
<div class="td" style="left:1306.4px;top:793px">350.25</div>
<div class="td" style="left:1451.7px;top:793px">3500</div>
<div class="td" style="left:1607.9px;top:793px">Mar 17, 2024, 2:38:37 AM</div>
<div class="rl" style="top:816px"></div>
<div class="td" style="left:28.9px;top:823px">nov</div>
<div class="td" style="left:151.3px;top:823px">april</div>
<div class="td" style="left:283.6px;top:823px">Monday</div>
<div class="td" style="left:419.4px;top:823px">22-Jun-17</div>
<div class="td" style="left:547px;top:823px">Dumpty</div>
<div class="td" style="left:664.8px;top:823px">Planning</div>
<div class="td" style="left:797px;top:823px">INFORMATION</div>
<div class="td" style="left:960.8px;top:823px">Austin</div>
<div class="td" style="left:1116.1px;top:823px">995</div>
<div class="td" style="left:1202.2px;top:823px">26</div>
<div class="td" style="left:1306.4px;top:823px">350.25</div>
<div class="td" style="left:1451.7px;top:823px">3500</div>
<div class="td" style="left:1607.9px;top:823px">Mar 17, 2024, 2:33:37 AM</div>
<div class="rl" style="top:846px"></div>
<div class="td" style="left:28.9px;top:853px">oct</div>
<div class="td" style="left:151.3px;top:853px">march</div>
<div class="td" style="left:283.6px;top:853px">Sunday</div>
<div class="td" style="left:419.4px;top:853px">29-Sep-23</div>
<div class="td" style="left:547px;top:853px">Humpty</div>
<div class="td" style="left:664.8px;top:853px">Low</div>
<div class="td" style="left:797px;top:853px">WARNING</div>
<div class="td" style="left:960.8px;top:853px">San Francisco</div>
<div class="td" style="left:1116.1px;top:853px">994</div>
<div class="td" style="left:1202.2px;top:853px">26</div>
<div class="td" style="left:1306.4px;top:853px">350.25</div>
<div class="td" style="left:1451.7px;top:853px">3500</div>
<div class="td" style="left:1607.9px;top:853px">Mar 17, 2024, 2:28:37 AM</div>
<div class="rl" style="top:876px"></div>
<div class="td" style="left:28.9px;top:883px">sep</div>
<div class="td" style="left:151.3px;top:883px">february</div>
<div class="td" style="left:283.6px;top:883px">Saturday</div>
<div class="td" style="left:419.4px;top:883px">07-Feb-14</div>
<div class="td" style="left:547px;top:883px">Doe</div>
<div class="td" style="left:664.8px;top:883px">Moderate</div>
<div class="td" style="left:797px;top:883px">MINOR</div>
<div class="td" style="left:960.8px;top:883px">Hyderabad</div>
<div class="td" style="left:1116.1px;top:883px">993</div>
<div class="td" style="left:1202.2px;top:883px">24</div>
<div class="td" style="left:1306.4px;top:883px">108.28</div>
<div class="td" style="left:1451.7px;top:883px">10000</div>
<div class="td" style="left:1607.9px;top:883px">Mar 17, 2024, 2:23:37 AM</div>
<div class="abs" style="left:1840px;top:697.5px;width:21px;height:205px;background:#f0f0f0"></div>
<svg class="abs" style="left:1844px;top:703px" width="12" height="10"><path d="M1,8L6,3L11,8Z" fill="#a3a3a3"/></svg>
<div class="abs" style="left:1842px;top:718px;width:17px;height:69px;background:#bdbdbd"></div>

<div class="abs" style="left:1653px;top:54px;width:192px;height:270px;background:#fff;border-radius:4px;box-shadow:0 5px 5px -3px rgba(0,0,0,.2),0 8px 10px 1px rgba(0,0,0,.14),0 3px 14px 2px rgba(0,0,0,.12);"></div>
<div class="abs" style="left:1662px;top:63px;width:172px;height:250px;border:3px solid #cc3a5e;"></div>
<div class="menuitem" style="top:78px">View JSON</div>
<div class="menuitem" style="top:128px">View Context</div>
<div class="menuitem" style="top:178px">View Dependencies</div>
<div class="menuitem" style="top:228px">Audit Logs</div>
<div class="menuitem" style="top:278px">Edit JSON</div>

</div>
<div class="abs" style="left:1838px;top:45px;width:48px;height:52px;border:3px solid #cc3a5e;"></div>
</body></html>
